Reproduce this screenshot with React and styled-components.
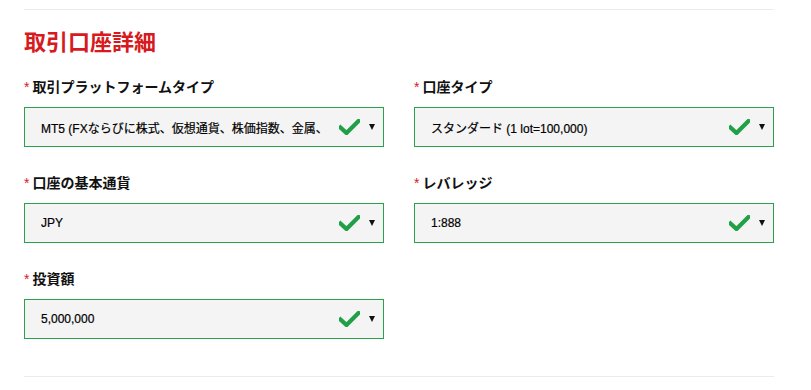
import styled, { createGlobalStyle } from 'styled-components';

const GlobalStyle = createGlobalStyle`
  body {
    margin: 0;
    background: #fff;
    font-family: "Liberation Sans", "Noto Sans CJK JP", sans-serif;
    color: #111;
  }
`;

const Page = styled.div`
  padding: 9px 37px 0 24px;
`;

const Rule = styled.hr`
  border: 0;
  border-top: 1px solid #ececec;
  margin: 0;
`;

const Title = styled.h2`
  margin: 18px 0 19px;
  font-size: 22px;
  line-height: 30px;
  font-weight: 700;
  color: #d71920;
`;

const Grid = styled.div`
  display: grid;
  grid-template-columns: 360px 360px;
  column-gap: 30px;
  row-gap: 26px;
  margin-bottom: 37px;
`;

const Field = styled.div`
  display: flex;
  flex-direction: column;
`;

const Label = styled.label`
  display: flex;
  align-items: center;
  gap: 3px;
  font-size: 14px;
  line-height: 20px;
  font-weight: 700;
  color: #111;
  margin-bottom: 10px;
`;

const Star = styled.span`
  color: #d71920;
  font-weight: 400;
  font-size: 14px;
`;

const Select = styled.div`
  box-sizing: border-box;
  height: 40px;
  display: flex;
  align-items: center;
  padding: 0 8px 0 16px;
  border: 1px solid #2aa24b;
  background: #f4f4f4;
  font-size: 12px;
  color: #000;
`;

const Value = styled.span`
  flex: 1;
  white-space: nowrap;
  overflow: hidden;
  -webkit-text-stroke: 0.2px #000;
`;

const Check = styled.svg`
  width: 21px;
  height: 16px;
  margin-right: 9px;
  flex-shrink: 0;
`;

const Caret = styled.span`
  width: 0;
  height: 0;
  border-left: 3px solid transparent;
  border-right: 3px solid transparent;
  border-top: 6px solid #111;
`;

const CheckIcon = () => (
  <Check viewBox="0 0 21 16">
    <path
      d="M1.5 8.5 L7.5 14 L19.5 2"
      fill="none"
      stroke="#22a048"
      strokeWidth="4.2"
      strokeLinecap="square"
      strokeLinejoin="miter"
    />
  </Check>
);

const fields = [
  { label: '取引プラットフォームタイプ', value: 'MT5 (FXならびに株式、仮想通貨、株価指数、金属、' },
  { label: '口座タイプ', value: 'スタンダード (1 lot=100,000)' },
  { label: '口座の基本通貨', value: 'JPY' },
  { label: 'レバレッジ', value: '1:888' },
  { label: '投資額', value: '5,000,000' },
];

export default function App() {
  return (
    <>
      <GlobalStyle />
      <Page>
        <Rule />
        <Title>取引口座詳細</Title>
        <Grid>
          {fields.map((f) => (
            <Field key={f.label}>
              <Label>
                <Star>*</Star>
                {f.label}
              </Label>
              <Select>
                <Value>{f.value}</Value>
                <CheckIcon />
                <Caret />
              </Select>
            </Field>
          ))}
        </Grid>
        <Rule />
      </Page>
    </>
  );
}
